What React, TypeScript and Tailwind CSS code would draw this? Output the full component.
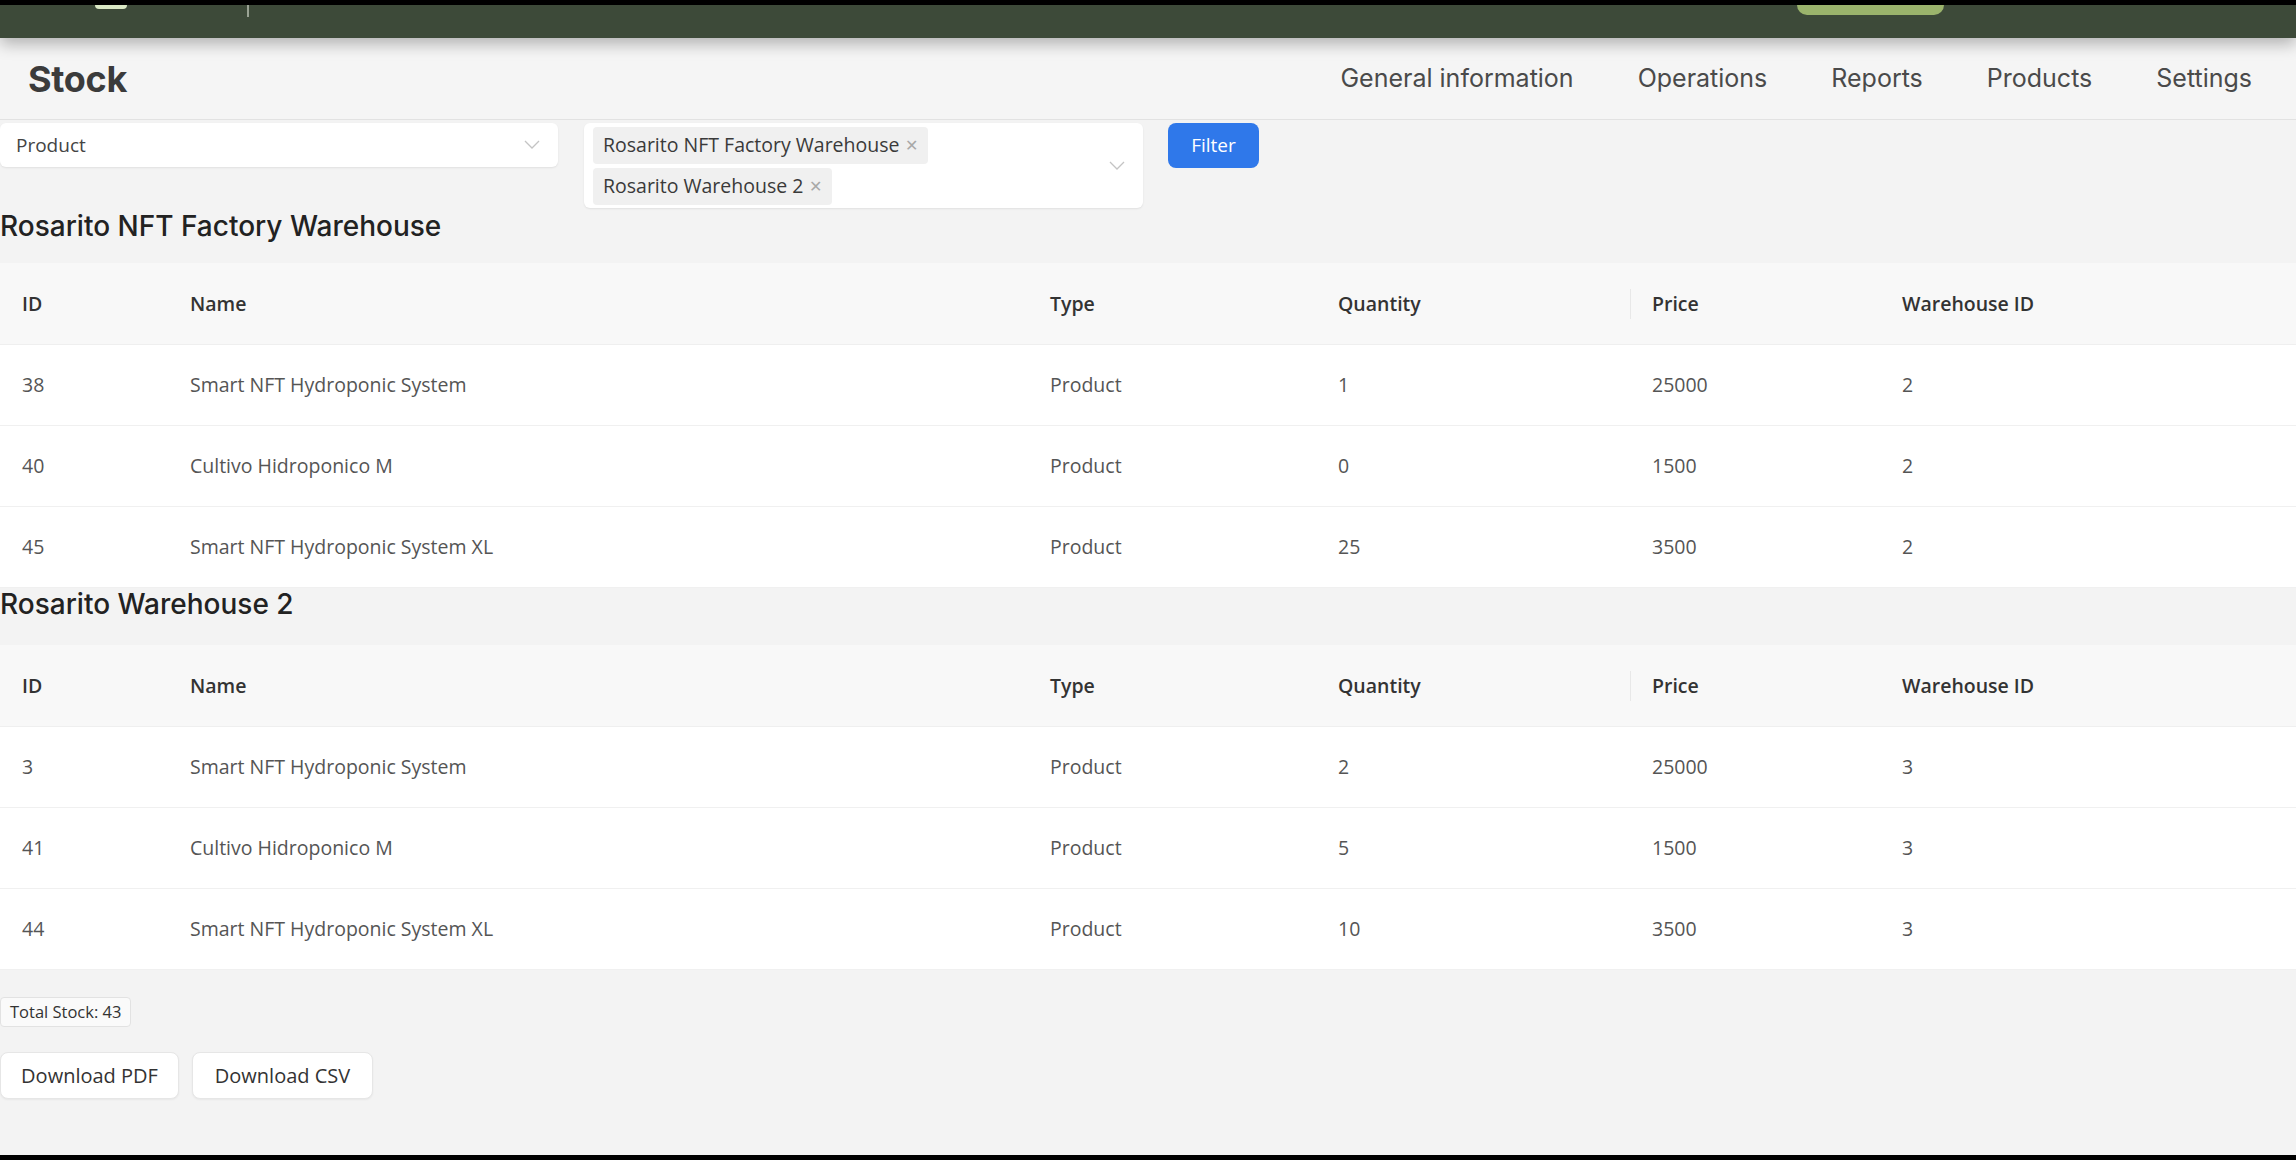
import React from "react";

type Item = { id: number; name: string; type: string; qty: number; price: number; wh: number };

const warehouses: { title: string; items: Item[] }[] = [
  {
    title: "Rosarito NFT Factory Warehouse",
    items: [
      { id: 38, name: "Smart NFT Hydroponic System", type: "Product", qty: 1, price: 25000, wh: 2 },
      { id: 40, name: "Cultivo Hidroponico M", type: "Product", qty: 0, price: 1500, wh: 2 },
      { id: 45, name: "Smart NFT Hydroponic System XL", type: "Product", qty: 25, price: 3500, wh: 2 },
    ],
  },
  {
    title: "Rosarito Warehouse 2",
    items: [
      { id: 3, name: "Smart NFT Hydroponic System", type: "Product", qty: 2, price: 25000, wh: 3 },
      { id: 41, name: "Cultivo Hidroponico M", type: "Product", qty: 5, price: 1500, wh: 3 },
      { id: 44, name: "Smart NFT Hydroponic System XL", type: "Product", qty: 10, price: 3500, wh: 3 },
    ],
  },
];

const nav = ["General information", "Operations", "Reports", "Products", "Settings"];

const head = "font-['Inter',sans-serif]";
const body = "font-['Open_Sans','Noto_Sans',sans-serif]";
const cols = "grid grid-cols-[190px_860px_288px_292px_272px_1fr]";

function Chevron() {
  return (
    <svg width="16" height="10" viewBox="0 0 16 10" fill="none" className="text-[#c4c4c4]">
      <path d="M1 1l7 7 7-7" stroke="currentColor" strokeWidth="1.3" />
    </svg>
  );
}

function Tag({ label }: { label: string }) {
  return (
    <span className="inline-flex items-center h-[37px] px-[10px] bg-[#f0f0f0] rounded-[4px] text-[19.5px] text-[#3a3a3a]">
      {label}
      <span className="ml-[6px] text-[16px] text-[#a8a8a8]">✕</span>
    </span>
  );
}

function StockTable({ items }: { items: Item[] }) {
  return (
    <div className={`${body} text-[19.5px]`}>
      <div className={`${cols} h-[82px] items-center bg-[#f8f8f8] border-b border-[#efefef] font-semibold text-[#333]`}>
        <div className="pl-[22px]">ID</div>
        <div>Name</div>
        <div>Type</div>
        <div>Quantity</div>
        <div className="flex items-center">
          <span className="h-[30px] w-px bg-[#e8e8e8] mr-[21px]" />
          Price
        </div>
        <div>Warehouse ID</div>
      </div>
      {items.map((it) => (
        <div key={it.id} className={`${cols} h-[81px] items-center bg-white border-b border-[#f0f0f0] text-[#555]`}>
          <div className="pl-[22px]">{it.id}</div>
          <div>{it.name}</div>
          <div>{it.type}</div>
          <div>{it.qty}</div>
          <div className="pl-[22px]">{it.price}</div>
          <div>{it.wh}</div>
        </div>
      ))}
    </div>
  );
}

export default function App() {
  return (
    <div className="w-[2296px] h-[1160px] bg-[#f3f3f3] flex flex-col overflow-hidden">
      {/* top bar */}
      <div className="h-[38px] shrink-0 bg-[#3d4a39] border-t-[5px] border-black flex relative z-10 shadow-[0_6px_16px_rgba(0,0,0,0.28)]">
        <div className="ml-[95px] w-[32px] h-[4px] rounded-b-full bg-[#d9e8c4]" />
        <div className="ml-[120px] w-[2px] h-[12px] bg-[#9aa394]" />
        <div className="ml-[1548px] w-[147px] h-[10px] rounded-b-[10px] bg-[#9bb46c]" />
      </div>

      {/* header */}
      <div className={`${head} h-[82px] shrink-0 flex items-center justify-between pl-[28px] pr-[44px] bg-[#f5f5f5] border-b border-[#e2e2e2]`}>
        <div className="text-[36px] font-bold text-[#3b3b3b] tracking-[-0.3px]">Stock</div>
        <div className="flex items-center gap-[64px] text-[25px] text-[#4a4a4a]">
          {nav.map((n) => (
            <span key={n}>{n}</span>
          ))}
        </div>
      </div>

      {/* filters */}
      <div className={`${body} flex items-start mt-[3px]`}>
        <div className="w-[558px] h-[44px] bg-white rounded-[6px] shadow-[0_1px_2px_rgba(0,0,0,0.08)] flex items-center justify-between pl-[16px] pr-[18px]">
          <span className="text-[19px] text-[#444]">Product</span>
          <Chevron />
        </div>
        <div className="ml-[26px] w-[559px] h-[85px] bg-white rounded-[6px] shadow-[0_1px_2px_rgba(0,0,0,0.08)] flex items-center justify-between pl-[9px] pr-[18px]">
          <div className="flex flex-col items-start gap-[4px]">
            <Tag label="Rosarito NFT Factory Warehouse" />
            <Tag label="Rosarito Warehouse 2" />
          </div>
          <Chevron />
        </div>
        <button className="ml-[25px] w-[91px] h-[45px] rounded-[8px] bg-[#2f78ea] text-white text-[19px] font-medium">
          Filter
        </button>
      </div>

      {warehouses.map((w, i) => (
        <div key={w.title}>
          <div className={`${head} ${i === 0 ? "h-[55px] leading-[36px]" : "h-[57px] leading-[32px]"} text-[28px] font-medium text-[#222]`}>
            {w.title}
          </div>
          <StockTable items={w.items} />
        </div>
      ))}

      {/* footer */}
      <div className={`${body} mt-[27px] flex flex-col items-start`}>
        <div className="h-[30px] px-[9px] flex items-center bg-[#fafafa] border border-[#e2e2e2] rounded-[4px] text-[16.5px] text-[#333]">
          Total Stock: 43
        </div>
        <div className="mt-[25px] flex gap-[13px]">
          <button className="w-[179px] h-[47px] bg-white border border-[#e6e6e6] rounded-[8px] shadow-[0_1px_2px_rgba(0,0,0,0.05)] text-[20px] text-[#333]">
            Download PDF
          </button>
          <button className="w-[181px] h-[47px] bg-white border border-[#e6e6e6] rounded-[8px] shadow-[0_1px_2px_rgba(0,0,0,0.05)] text-[20px] text-[#333]">
            Download CSV
          </button>
        </div>
      </div>

      <div className="mt-auto h-[5px] bg-black" />
    </div>
  );
}
